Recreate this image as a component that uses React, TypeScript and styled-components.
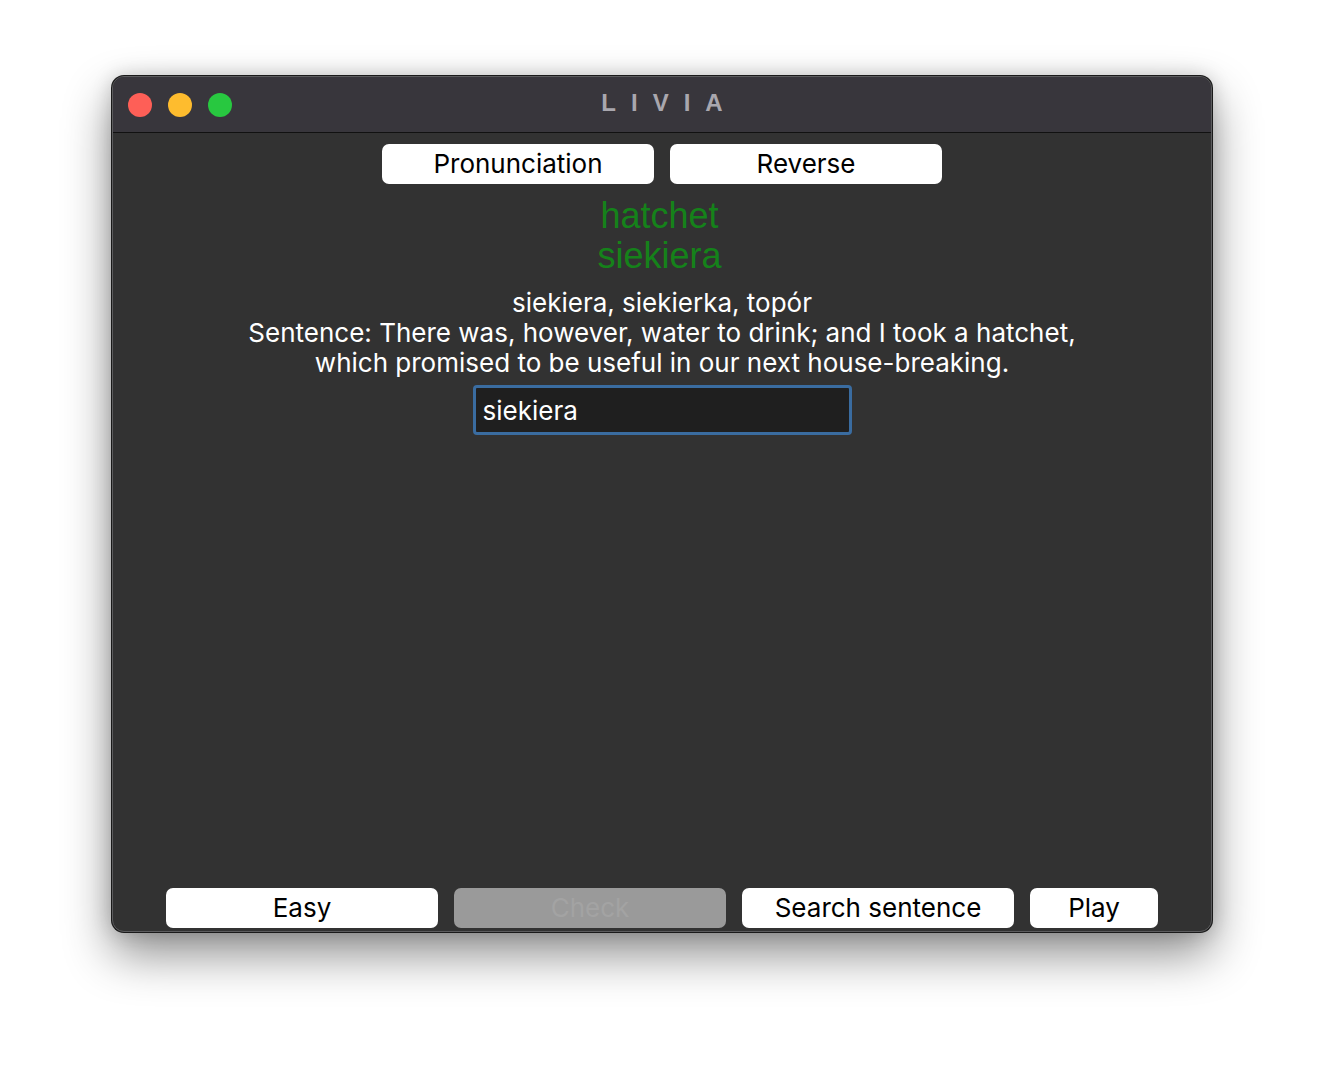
import React from "react";
import styled, { createGlobalStyle } from "styled-components";

const Global = createGlobalStyle`
  html, body { margin: 0; padding: 0; background: #ffffff; }
  body { font-family: Inter, "Liberation Sans", Arial, sans-serif; }
`;

const Page = styled.div`
  width: 1324px;
  height: 1080px;
  padding: 76px 0 0 112px;
  box-sizing: border-box;
`;

const Window = styled.div`
  width: 1100px;
  height: 856px;
  box-sizing: border-box;
  display: flex;
  flex-direction: column;
  border-radius: 12px;
  overflow: hidden;
  background: #323232;
  border: 1px solid #5c5c5e;
  box-shadow: 0 0 0 1px #1a1a1a, 0 22px 48px rgba(0, 0, 0, 0.45), 0 0 20px rgba(0, 0, 0, 0.18);
`;

const TitleBar = styled.div`
  height: 55px;
  flex: none;
  background: #38363c;
  border-bottom: 1px solid #111;
  display: flex;
  align-items: center;
  position: relative;
  padding-left: 15px;
  box-sizing: content-box;
  gap: 16px;
`;

const Light = styled.span<{ $color: string }>`
  width: 24px;
  height: 24px;
  border-radius: 50%;
  background: ${(p) => p.$color};
`;

const Title = styled.div`
  position: absolute;
  left: 0;
  right: 0;
  top: 0;
  bottom: 3px;
  display: flex;
  align-items: center;
  justify-content: center;
  font-family: "Liberation Sans", Arial, sans-serif;
  font-weight: 700;
  font-size: 24px;
  letter-spacing: 15px;
  padding-left: 15px;
  color: #a9a7ae;
  pointer-events: none;
`;

const Content = styled.div`
  flex: 1;
  display: flex;
  flex-direction: column;
  align-items: center;
  padding: 11px 0 3px;
`;

const ButtonRow = styled.div`
  display: flex;
  gap: 16px;
  justify-content: center;
`;

const Button = styled.button<{ $w?: number }>`
  width: ${(p) => p.$w ?? 272}px;
  height: 40px;
  border: none;
  border-radius: 7px;
  background: #ffffff;
  color: #000000;
  font-family: Inter, "Liberation Sans", Arial, sans-serif;
  font-size: 26px;
  line-height: 40px;
  padding: 0;
  cursor: pointer;
  &:disabled {
    background: #9a9a9a;
    color: #a3a3a3;
    cursor: default;
  }
`;

const Green = styled.div`
  margin-top: 12px;
  padding-right: 5px;
  color: #15821a;
  font-family: "Liberation Sans", Arial, sans-serif;
  font-size: 36px;
  line-height: 40px;
  text-align: center;
`;

const Info = styled.div`
  margin-top: 12px;
  color: #ffffff;
  font-family: Inter, "Liberation Sans", Arial, sans-serif;
  font-size: 26px;
  line-height: 30px;
  text-align: center;
`;

const Input = styled.input`
  margin-top: 7px;
  width: 379px;
  height: 50px;
  box-sizing: border-box;
  background: #1f1f1f;
  border: 3px solid #3a6ca0;
  border-radius: 4px;
  color: #ffffff;
  font-family: Inter, "Liberation Sans", Arial, sans-serif;
  font-size: 26px;
  padding: 0 7px;
  outline: none;
`;

const Spacer = styled.div`
  flex: 1;
`;

export default function App() {
  return (
    <Page>
      <Global />
      <Window>
        <TitleBar>
          <Light $color="#fe5f57" />
          <Light $color="#febc2e" />
          <Light $color="#28c840" />
          <Title>LIVIA</Title>
        </TitleBar>
        <Content>
          <ButtonRow>
            <Button>Pronunciation</Button>
            <Button>Reverse</Button>
          </ButtonRow>
          <Green>
            hatchet
            <br />
            siekiera
          </Green>
          <Info>
            siekiera, siekierka, topór
            <br />
            Sentence: There was, however, water to drink; and I took a hatchet,
            <br />
            which promised to be useful in our next house-breaking.
          </Info>
          <Input defaultValue="siekiera" />
          <Spacer />
          <ButtonRow>
            <Button>Easy</Button>
            <Button disabled>Check</Button>
            <Button>Search sentence</Button>
            <Button $w={128}>Play</Button>
          </ButtonRow>
        </Content>
      </Window>
    </Page>
  );
}
